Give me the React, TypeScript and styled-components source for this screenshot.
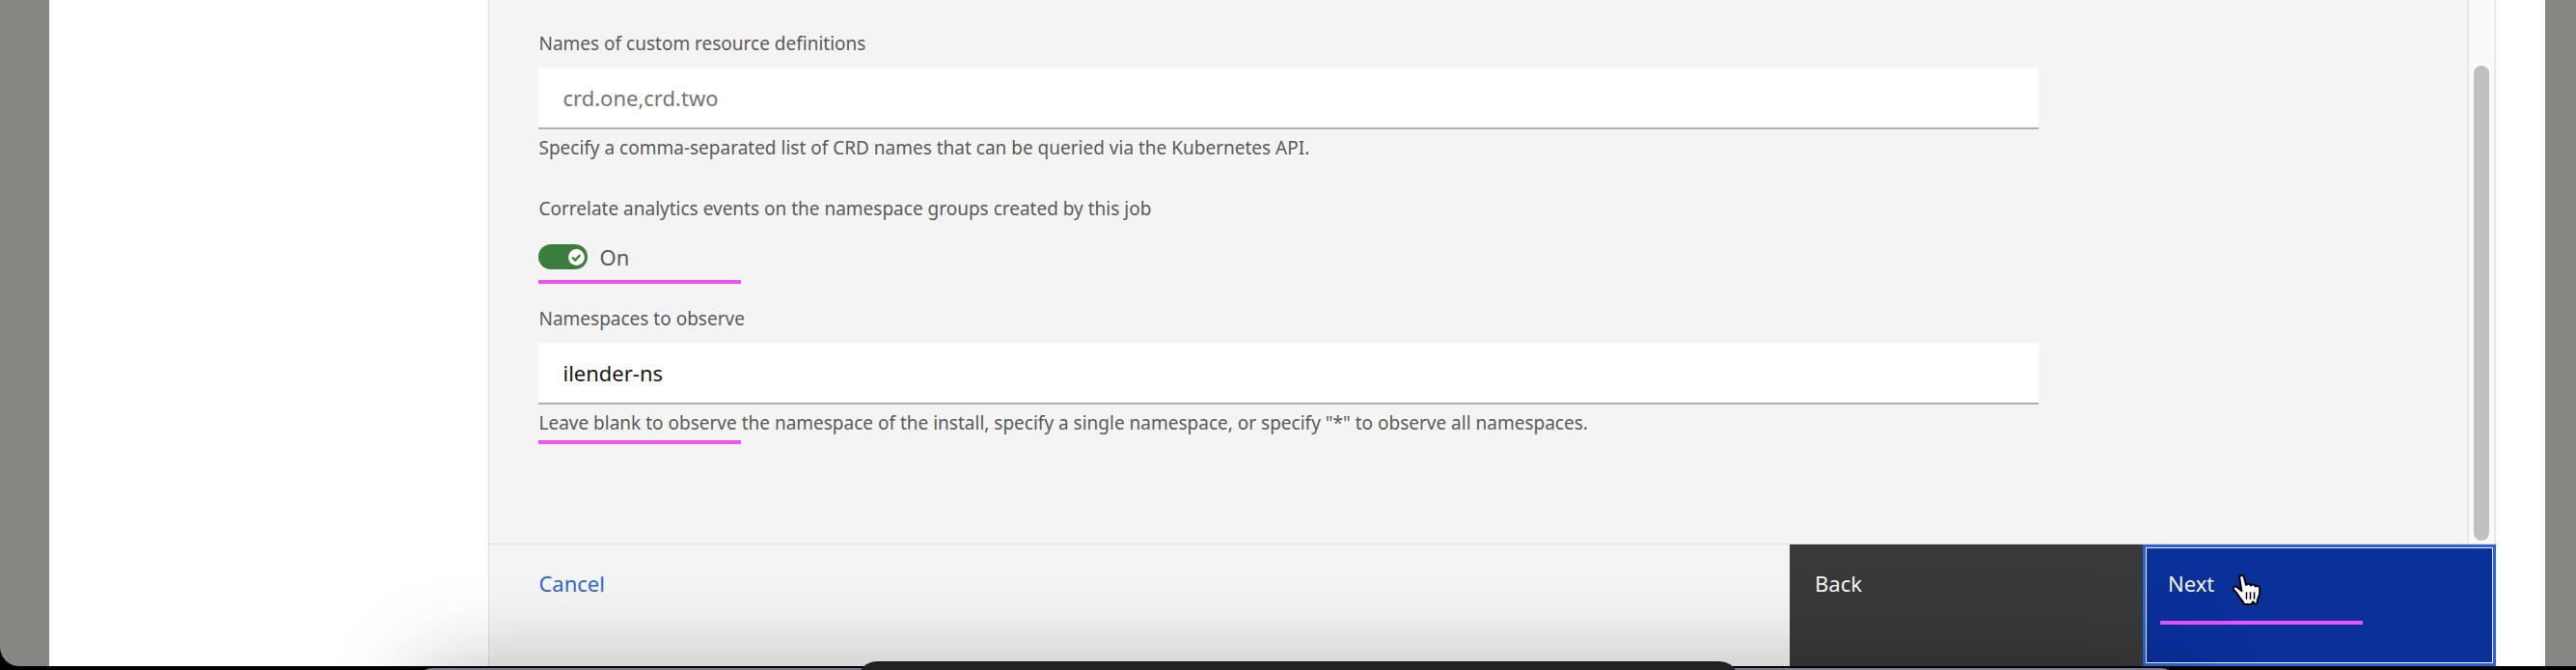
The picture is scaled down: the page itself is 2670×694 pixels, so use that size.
import React, { useId, useState } from 'react';
import styled, { createGlobalStyle, css } from 'styled-components';

const GlobalStyle = createGlobalStyle`
  *, *::before, *::after {
    box-sizing: border-box;
  }
  body {
    margin: 0;
    background: #000;
    color: #5a5a5a;
    font-family: "Noto Sans", "Liberation Sans", sans-serif;
    font-size: 19px;
    line-height: 24px;
  }
  button, input {
    font: inherit;
  }
`;

const Desktop = styled.div`
  position: relative;
  display: flex;
  flex-direction: column;
  min-height: 100vh;
  padding-bottom: 4px;
  overflow: hidden;
  background: #000;
`;

const BrowserWindow = styled.div`
  position: relative;
  display: flex;
  flex: 1;
  overflow: hidden;
  border-bottom-left-radius: 20px;
  background: #868682;
`;

const Modal = styled.div`
  display: flex;
  flex: 1;
  margin: 0 32px 0 51px;
  padding-right: 51px;
  background: #fff;
`;

const StepRail = styled.aside`
  flex: 0 0 18%;
  border-right: 1px solid #e0e0e0;
`;

const Content = styled.main`
  display: flex;
  flex: 1;
  flex-direction: column;
  min-width: 0;
  background: #f4f4f4;
`;

const ScrollArea = styled.div`
  display: flex;
  flex: 1;
`;

const Form = styled.form`
  display: flex;
  flex: 1;
  flex-direction: column;
  gap: 39px;
  padding: 33px 5px 111px 51px;
`;

const ScrollTrack = styled.div`
  display: flex;
  justify-content: center;
  width: 30px;
  padding: 68px 0 3px;
  border: 2px solid #e8e8e8;
  border-width: 0 2px;
  background: #fafafa;
`;

const ScrollThumb = styled.div`
  width: 16px;
  border-radius: 8px;
  background: #c1c1c1;
`;

const Field = styled.div<{ $markerDrop?: number }>`
  position: relative;
  display: flex;
  flex-direction: column;
  align-items: flex-start;
  width: 78%;

  ${({ $markerDrop }) =>
    $markerDrop &&
    css`
      &::after {
        content: '';
        position: absolute;
        left: 0;
        bottom: -${$markerDrop}px;
        width: 210px;
        height: 4px;
        background: #ec52f5;
      }
    `}
`;

const FieldLabel = styled.label`
  margin-bottom: 13px;
`;

const TextInput = styled.input`
  width: 100%;
  height: 64px;
  padding: 0 25px;
  border: 0;
  border-bottom: 2px solid #b0b0b0;
  border-radius: 0;
  outline: 0;
  background: #fff;
  color: #161616;
  font-size: 22px;

  &::placeholder {
    color: #757575;
    opacity: 1;
  }
`;

const HelperText = styled.p`
  margin: 7px 0 0;
`;

const ToggleLabel = styled(FieldLabel)`
  margin-bottom: 25px;
`;

const ToggleRow = styled.div`
  display: flex;
  align-items: center;
  gap: 12px;
  height: 26px;
  font-size: 22px;
`;

const ToggleTrack = styled.span<{ $on: boolean }>`
  position: relative;
  display: flex;
  align-items: center;
  justify-content: ${({ $on }) => ($on ? 'flex-end' : 'flex-start')};
  width: 51px;
  height: 26px;
  padding: 0 3px;
  border-radius: 13px;
  background: ${({ $on }) => ($on ? '#3b7d3d' : '#8d8d8d')};
`;

const ToggleInput = styled.input`
  position: absolute;
  inset: 0;
  width: 100%;
  height: 100%;
  margin: 0;
  opacity: 0;
`;

const Footer = styled.footer`
  display: flex;
  height: 127px;
  border-top: 1px solid #dcdcdc;
`;

const footerButton = css`
  display: flex;
  align-items: flex-start;
  border: 0;
  font-size: 22px;
  line-height: 28px;
  text-align: left;
  cursor: pointer;
`;

const CancelButton = styled.button`
  ${footerButton}
  flex: 1;
  padding: 26px 51px;
  background: transparent;
  color: #2f67dc;
`;

const BackButton = styled.button`
  ${footerButton}
  flex: 0 0 366px;
  padding: 26px;
  background: #393939;
  color: #f4f4f4;
`;

const NextButton = styled.button`
  ${footerButton}
  position: relative;
  flex: 0 0 366px;
  padding: 23px;
  border: 3px solid #2a62e2;
  outline: 1px solid #f4f4f4;
  outline-offset: -4px;
  background: #0a3099;
  color: #f4f4f4;
`;

const NextMarker = styled.span`
  position: absolute;
  left: 15px;
  bottom: 40px;
  width: 210px;
  height: 4px;
  background: #ec52f5;
`;

const HandPointer = styled.svg`
  position: absolute;
  left: 89px;
  top: 27px;
  width: 34px;
  height: 38px;
`;

const RearPanel = styled.div`
  position: absolute;
  left: 432px;
  right: 414px;
  bottom: -108px;
  height: 110px;
  border-radius: 16px;
  background: #7d7c8e;
`;

const PanelShadow = styled.div`
  position: absolute;
  left: 432px;
  right: 414px;
  bottom: -120px;
  height: 118px;
  border-radius: 16px;
  box-shadow: 0 0 92px rgba(0, 0, 0, 0.26);
`;

const DockPanel = styled.div`
  position: absolute;
  left: 889px;
  right: 868px;
  bottom: -31px;
  height: 40px;
  border-radius: 20px 20px 0 0;
  background: #212023;
`;

function CheckKnob() {
  return (
    <svg width="17" height="17" viewBox="0 0 17 17" aria-hidden="true">
      <circle cx="8.5" cy="8.5" r="8.4" fill="#fff" />
      <path d="M4.1 8.5 7.2 11.6 12.4 6" fill="none" stroke="#3b7d3d" strokeWidth="2.3" />
    </svg>
  );
}

function PointerIcon() {
  return (
    <HandPointer viewBox="0 0 34 38" aria-hidden="true">
      <path
        d="M8.2 4.4C7.8 1.5 12 .8 12.9 3.8L15.1 12.1C16.1 10 19.3 10.3 19.8 12.5 21.3 10.7 24.2 11.3 24.8 13.5 26.6 12 29 13.4 29.2 15.8 29.6 20.5 29.2 22.4 27.6 25.4 26.4 27.6 26.3 29 26.5 31.2L23.6 31.4 22.2 29.3 20.3 32H13.2C12.3 29.2 9.2 26.5 7.5 23.4 5.9 20.6 4.6 19.3 2.5 17.1 .4 14.6 3.4 12.3 5.9 14.2L10.4 18.1Z"
        fill="#fff"
        stroke="#000"
        strokeWidth="2"
        strokeLinejoin="round"
      />
      <path d="M15.5 19.2V26.8M19.5 19.2V26.8M23.5 19.2V26.8" stroke="#000" strokeWidth="1.5" />
    </HandPointer>
  );
}

type TextFieldProps = {
  label: string;
  helper: string;
  placeholder?: string;
  defaultValue?: string;
  markerDrop?: number;
};

function TextField({ label, helper, placeholder, defaultValue, markerDrop }: TextFieldProps) {
  const id = useId();
  return (
    <Field $markerDrop={markerDrop}>
      <FieldLabel htmlFor={id}>{label}</FieldLabel>
      <TextInput
        id={id}
        type="text"
        placeholder={placeholder}
        defaultValue={defaultValue}
        aria-describedby={`${id}-help`}
      />
      <HelperText id={`${id}-help`}>{helper}</HelperText>
    </Field>
  );
}

function ToggleField({ label }: { label: string }) {
  const id = useId();
  const [on, setOn] = useState(true);
  return (
    <Field $markerDrop={15}>
      <ToggleLabel htmlFor={id}>{label}</ToggleLabel>
      <ToggleRow>
        <ToggleTrack $on={on}>
          <CheckKnob />
          <ToggleInput
            id={id}
            type="checkbox"
            role="switch"
            checked={on}
            onChange={(event) => setOn(event.target.checked)}
          />
        </ToggleTrack>
        <span>{on ? 'On' : 'Off'}</span>
      </ToggleRow>
    </Field>
  );
}

export default function App() {
  return (
    <Desktop>
      <GlobalStyle />
      <BrowserWindow>
        <Modal>
          <StepRail />
          <Content>
            <ScrollArea>
              <Form>
                <TextField
                  label="Names of custom resource definitions"
                  placeholder="crd.one,crd.two"
                  helper="Specify a comma-separated list of CRD names that can be queried via the Kubernetes API."
                />
                <ToggleField label="Correlate analytics events on the namespace groups created by this job" />
                <TextField
                  label="Namespaces to observe"
                  defaultValue="ilender-ns"
                  helper={
                    'Leave blank to observe the namespace of the install, specify a single namespace, or specify "*" to observe all namespaces.'
                  }
                  markerDrop={10}
                />
              </Form>
              <ScrollTrack>
                <ScrollThumb />
              </ScrollTrack>
            </ScrollArea>
            <Footer>
              <CancelButton type="button">Cancel</CancelButton>
              <BackButton type="button">Back</BackButton>
              <NextButton type="button">
                Next
                <NextMarker />
                <PointerIcon />
              </NextButton>
            </Footer>
          </Content>
        </Modal>
        <PanelShadow />
      </BrowserWindow>
      <RearPanel />
      <DockPanel />
    </Desktop>
  );
}
